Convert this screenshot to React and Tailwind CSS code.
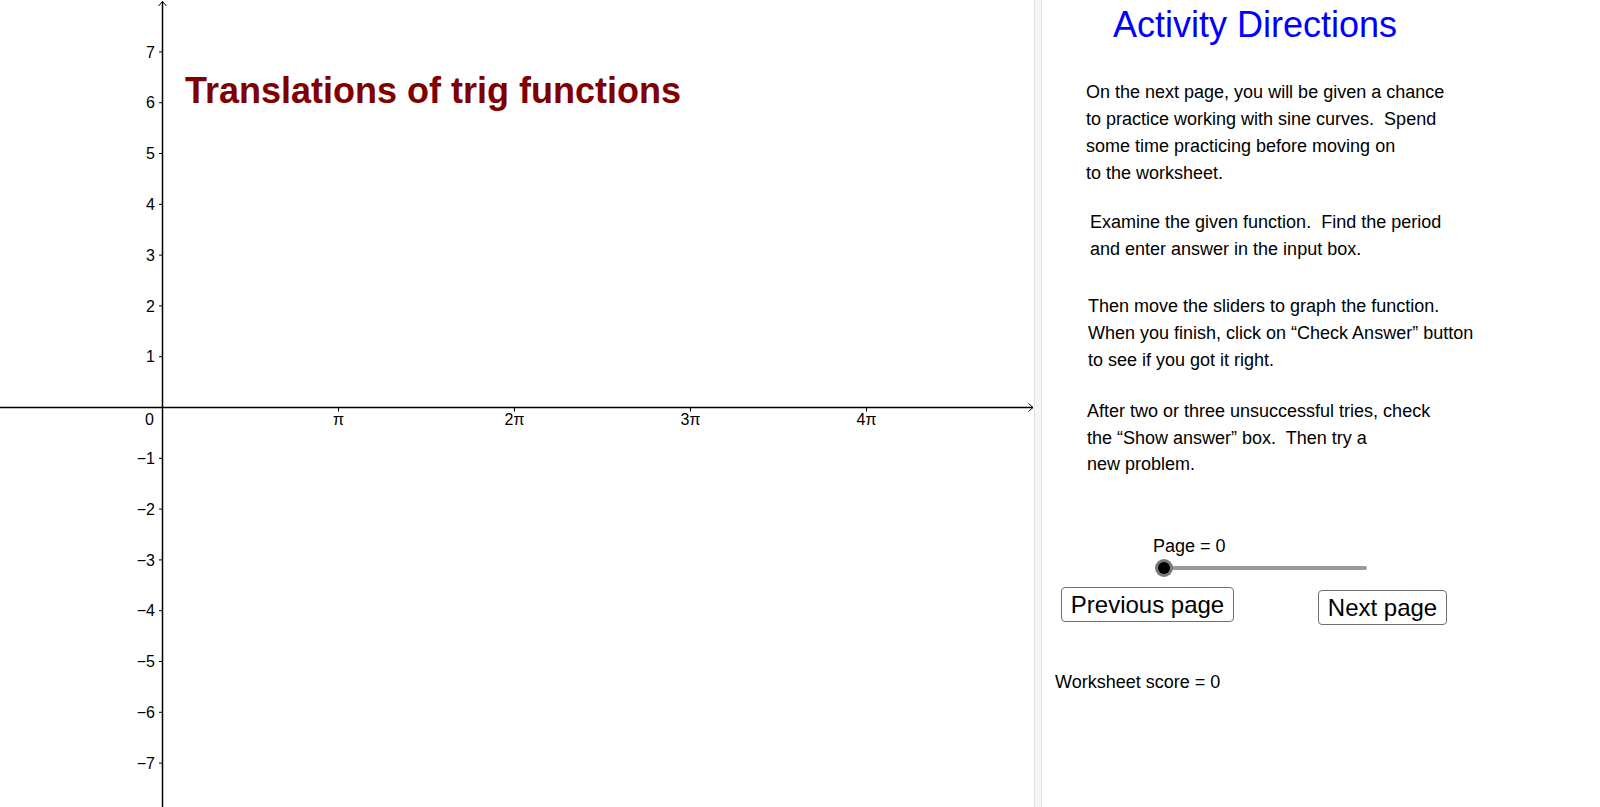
import React from "react";

const X0 = 162.5;
const Y0 = 407.5;
const UNIT = 50.8;
const PI = 176;

function Graph() {
  const yTicks = [7, 6, 5, 4, 3, 2, 1, -1, -2, -3, -4, -5, -6, -7];
  const xTicks = [1, 2, 3, 4];
  return (
    <svg width="1034" height="807" viewBox="0 0 1034 807" className="block">
      <g stroke="#000" strokeWidth="1.5" fill="none">
        <line x1={X0} y1="1.5" x2={X0} y2="807" />
        <line x1="0" y1={Y0} x2="1033" y2={Y0} />
        <polyline points={`${X0 - 4},6 ${X0},1.5 ${X0 + 4},6`} strokeWidth="1" />
        <polyline points={`1028.5,${Y0 - 4} 1033,${Y0} 1028.5,${Y0 + 4}`} strokeWidth="1" />
      </g>
      <g stroke="#000" strokeWidth="1">
        {yTicks.map((k) => (
          <line key={k} x1={X0 - 3.5} y1={Y0 - k * UNIT} x2={X0} y2={Y0 - k * UNIT} />
        ))}
        {xTicks.map((n) => (
          <line key={n} x1={X0 + n * PI} y1={Y0} x2={X0 + n * PI} y2={Y0 + 4} />
        ))}
      </g>
      <g fill="#000" fontSize="16">
        {yTicks.map((k) => (
          <text key={k} x="155" y={Y0 - k * UNIT + 5.7} textAnchor="end">
            {k < 0 ? "\u2212" + Math.abs(k) : String(k)}
          </text>
        ))}
        <text x="154" y="425" textAnchor="end">0</text>
        {xTicks.map((n) => (
          <text key={n} x={X0 + n * PI} y="425" textAnchor="middle">
            {n === 1 ? "\u03c0" : n + "\u03c0"}
          </text>
        ))}
      </g>
    </svg>
  );
}

export default function App() {
  return (
    <div className="flex w-[1600px] h-[807px] bg-white overflow-hidden font-['Liberation_Sans',Arial,sans-serif] text-black">
      <div className="relative w-[1034px] h-[807px] shrink-0">
        <Graph />
        <div className="absolute left-[185px] top-[72.5px] text-[36px] leading-[36px] font-bold text-[#800000] whitespace-nowrap">
          Translations of trig functions
        </div>
      </div>
      <div className="w-[8px] h-[807px] shrink-0 bg-[#f5f5f5] border-l border-r border-[#e2e2e2]" />
      <div className="flex-1 flex flex-col items-start">
        <div className="ml-[71px] mt-[7px] text-[36px] leading-[36px] text-[#0000ff] whitespace-nowrap">
          Activity Directions
        </div>
        <div className="ml-[44px] mt-[36.4px] text-[18px] leading-[26.7px] whitespace-pre">
          <div>On the next page, you will be given a chance</div>
          <div>to practice working with sine curves.  Spend</div>
          <div>some time practicing before moving on</div>
          <div>to the worksheet.</div>
        </div>
        <div className="ml-[48px] mt-[22.5px] text-[18px] leading-[27.2px] whitespace-pre">
          <div>Examine the given function.  Find the period</div>
          <div>and enter answer in the input box.</div>
        </div>
        <div className="ml-[46px] mt-[30px] text-[18px] leading-[26.7px] whitespace-pre">
          <div>Then move the sliders to graph the function.</div>
          <div>When you finish, click on “Check Answer” button</div>
          <div>to see if you got it right.</div>
        </div>
        <div className="ml-[45px] mt-[24.7px] text-[18px] leading-[26.7px] whitespace-pre">
          <div>After two or three unsuccessful tries, check</div>
          <div>the “Show answer” box.  Then try a</div>
          <div>new problem.</div>
        </div>
        <div className="ml-[111px] mt-[54.5px] text-[18px] leading-[26.7px] whitespace-pre">
          Page = 0
        </div>
        <div className="relative ml-[113px] h-[18px] w-[212px] flex items-center">
          <div className="ml-[9px] w-[203px] h-[4px] rounded-full bg-[#9a9a9a]" />
          <div className="absolute left-0 top-0 w-[18px] h-[18px] rounded-full bg-[#7a7a7a] flex items-center justify-center">
            <div className="w-[12px] h-[12px] rounded-full bg-black" />
          </div>
        </div>
        <div className="flex items-start mt-[10px] ml-[19px]">
          <div className="w-[173px] h-[35px] border border-[#707070] rounded-[4px] bg-white text-[24px] leading-none flex items-center justify-center whitespace-nowrap">
            Previous page
          </div>
          <div className="ml-[84px] mt-[3px] w-[129px] h-[35px] border border-[#707070] rounded-[4px] bg-white text-[24px] leading-none flex items-center justify-center whitespace-nowrap">
            Next page
          </div>
        </div>
        <div className="ml-[13px] mt-[44px] text-[18px] leading-[26.7px] whitespace-pre">
          Worksheet score = 0
        </div>
      </div>
    </div>
  );
}
